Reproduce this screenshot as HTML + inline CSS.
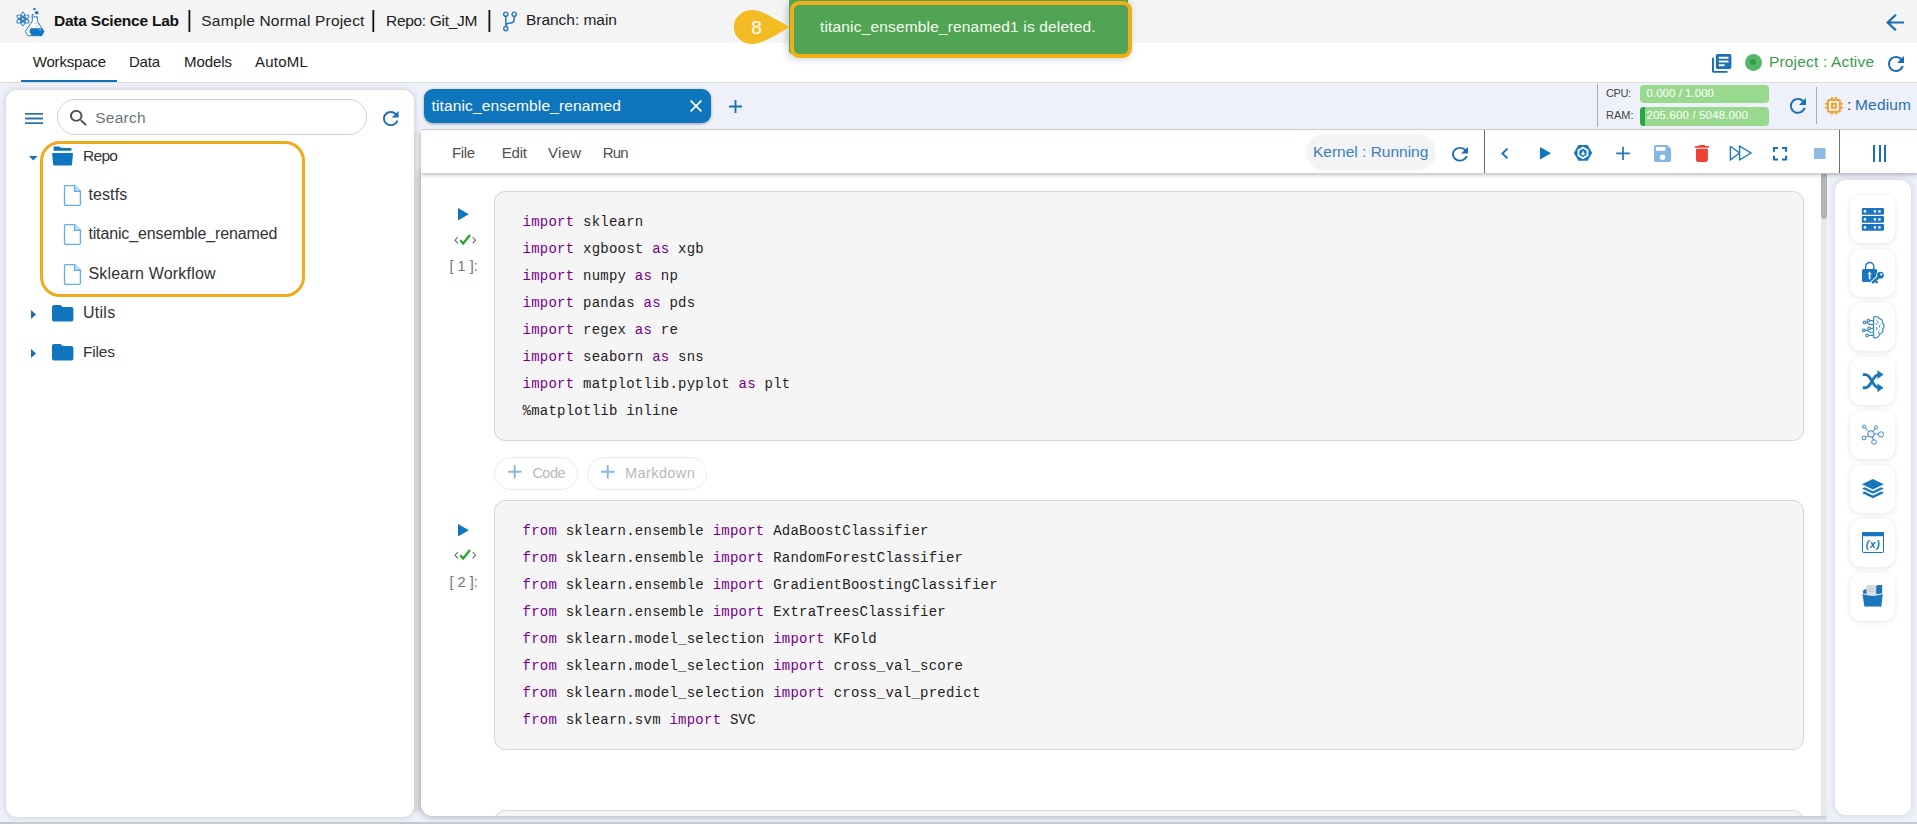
<!DOCTYPE html>
<html lang="en"><head><meta charset="utf-8"><title>Data Science Lab</title>
<style>
*{box-sizing:border-box;margin:0;padding:0}
html,body{width:1917px;height:824px;overflow:hidden}
body{position:relative;background:#eef1f9;font-family:"Liberation Sans",sans-serif;color:#333;font-size:16px}
.abs{position:absolute}
.t{position:absolute;white-space:nowrap;line-height:1}
svg{position:absolute;display:block;overflow:visible}
#topbar{left:0;top:0;width:1917px;height:43px;background:#f4f4f4}
#navbar{left:0;top:43px;width:1917px;height:40px;background:#fff;border-bottom:1px solid #dcdde3}
.sep{position:absolute;width:1.75px;background:#111;top:10px;height:22px}
#ul{left:21px;top:80px;width:96px;height:2px;background:#1570b8}
#left{left:6px;top:90px;width:408px;height:727px;background:#fff;border-radius:11px;box-shadow:0 0 6px 0 rgba(70,72,95,.24)}
#nb{left:421px;top:173px;width:1406px;height:643px;background:#fff;border-radius:0 0 0 11px;box-shadow:0 0 6px 1px rgba(70,72,85,.42);clip-path:inset(-12px 0 -12px -12px)}
#right{left:1835px;top:180px;width:76px;height:635px;background:#fff;border-radius:11px;box-shadow:0 0 6px 0 rgba(70,72,95,.2)}
#bottomline{left:0;top:822px;width:1917px;height:2px;background:#c9c8cc}
#tabstripline{left:421px;top:129px;width:1496px;height:1px;background:#cfd1d8}
#tab{left:424px;top:89px;width:287px;height:34px;background:#0f75bc;border-radius:9px;box-shadow:0 1px 3px rgba(0,0,0,.35)}
#toolbar{left:421px;top:130px;width:1496px;height:43px;background:#fff;box-shadow:0 2px 4px rgba(0,0,0,.25)}
.vsep{position:absolute;width:1px;background:#6e6e6e}
#kernel{left:1306px;top:134px;width:130px;height:36px;border-radius:18px;background:#f3f4f6}
#search{left:57px;top:99px;width:310px;height:36px;border:1px solid #cfcfcf;border-radius:18px;background:#fff}
#hl{left:40.2px;top:140.8px;width:264.6px;height:155.8px;border:3.5px solid #f0ab1c;border-radius:20px}
.cell{position:absolute;left:494px;width:1310px;background:#f5f5f5;border:1px solid #d6d6d6;border-radius:11px}
.code{position:absolute;left:522.5px;font-family:"Liberation Mono",monospace;font-size:14px;letter-spacing:.24px;line-height:27px;color:#222;white-space:pre}
.code b{font-weight:400;color:#770088}
.pill{position:absolute;height:33px;top:457px;border:1px solid #ebebeb;border-radius:17px;background:#fff}
.bar{position:absolute;left:1640px;width:129px;border-radius:4px;background:#98d98e;overflow:hidden}
.ibtn{position:absolute;left:1850px;width:45px;height:48.3px;border-radius:11px;background:#fff;box-shadow:0 1px 5px rgba(60,70,110,.15)}
#toast{left:789px;top:0;width:339px;height:54px;background:#52a455;border-radius:0 0 4px 4px;box-shadow:0 3px 10px rgba(0,0,0,.28)}
#toasthl{left:790px;top:1px;width:341.5px;height:57px;border:4.5px solid #f2ad18;border-radius:9px}
</style></head>
<body>
<div class="abs" id="topbar"></div><div class="abs" id="navbar"></div><div class="abs" id="ul"></div><svg style="left:0.00px;top:0.00px" width="60.00" height="43.00" viewBox="0 0 60 43" preserveAspectRatio="none"><ellipse cx="22.9" cy="19" rx="6.8" ry="2.3" transform="rotate(90 22.9 19)" fill="none" stroke="#1b75bc" stroke-width="1"/><ellipse cx="22.9" cy="19" rx="6.8" ry="2.3" transform="rotate(30 22.9 19)" fill="none" stroke="#1b75bc" stroke-width="1"/><ellipse cx="22.9" cy="19" rx="6.8" ry="2.3" transform="rotate(-30 22.9 19)" fill="none" stroke="#1b75bc" stroke-width="1"/><circle cx="22.9" cy="19" r="1.5" fill="#bfe3fb" stroke="#1b75bc" stroke-width=".9"/><path d="M31.4 16.9H38.1M32.3 17V21.2L25.3 31.5 27.8 35.7H41.7L44 31.5 37.3 21.2V17" fill="#fff" stroke="#1b75bc" stroke-width=".95" stroke-linejoin="round"/><path d="M30.6 28.2H41.9L44 31.5 41.7 35.7H31.6L29.4 31.5Z" fill="#1277c4"/><path d="M38.5 29.6h3.6v.9h-3.6z" fill="#6fb1e4"/><path d="M34.3 23h3v.7h-3zM36 25.6h2.6v.7H36z" fill="#b9bcc2"/><circle cx="34.5" cy="9" r="1.2" fill="#1b75bc"/><circle cx="36.7" cy="12.8" r="1.8" fill="#1b75bc"/><circle cx="32.6" cy="14.9" r=".95" fill="#1b75bc"/></svg><span class="t" id="t0" style="left:54.00px;top:13.00px;font-size:15.5px;color:#111;font-weight:700;letter-spacing:-0.224px;">Data Science Lab</span><svg style="left:0.00px;top:0.00px" width="600.00" height="43.00" viewBox="0 0 600 43" preserveAspectRatio="none"><rect x="188.5" y="10" width="1.8" height="22" fill="#111"/></svg><span class="t" id="t1" style="left:201.30px;top:13.00px;font-size:15.5px;color:#222;letter-spacing:0.187px;">Sample Normal Project</span><svg style="left:0.00px;top:0.00px" width="600.00" height="43.00" viewBox="0 0 600 43" preserveAspectRatio="none"><rect x="372.4" y="10" width="1.8" height="22" fill="#111"/></svg><span class="t" id="t2" style="left:386.00px;top:13.00px;font-size:15.5px;color:#222;letter-spacing:-0.315px;">Repo: Git_JM</span><svg style="left:0.00px;top:0.00px" width="600.00" height="43.00" viewBox="0 0 600 43" preserveAspectRatio="none"><rect x="488.5" y="10" width="1.8" height="22" fill="#111"/></svg><svg style="left:495.00px;top:5.00px" width="30.00" height="33.00" viewBox="495 5 30 33" preserveAspectRatio="none"><path d="M505.8 16.5V26.3M514.2 16.5V19.5Q514.2 22.6 511 22.9L508.5 23.2Q505.8 23.6 505.8 26" fill="none" stroke="#2e7ab8" stroke-width="1.5"/><circle cx="505.8" cy="14.2" r="2.1" fill="#e4fbff" stroke="#2e7ab8" stroke-width="1.4"/><circle cx="514.2" cy="14.2" r="2.1" fill="#e4fbff" stroke="#2e7ab8" stroke-width="1.4"/><circle cx="505.8" cy="28.6" r="2.1" fill="#e4fbff" stroke="#2e7ab8" stroke-width="1.4"/></svg><span class="t" id="t3" style="left:526.00px;top:12.00px;font-size:15.5px;color:#222;letter-spacing:-0.030px;">Branch: main</span><svg style="left:1886.40px;top:14.00px" width="18.10" height="17.00" viewBox="4 4 16 16" preserveAspectRatio="none"><path fill="#1b6fb5" d="M20 11H7.83l5.59-5.59L12 4l-8 8 8 8 1.41-1.41L7.83 13H20v-2z" /></svg><span class="t" id="t4" style="left:32.75px;top:54.00px;font-size:15px;color:#222;letter-spacing:-0.189px;">Workspace</span><span class="t" id="t5" style="left:129.00px;top:54.00px;font-size:15px;color:#222;letter-spacing:-0.229px;">Data</span><span class="t" id="t6" style="left:184.00px;top:54.00px;font-size:15px;color:#222;letter-spacing:-0.072px;">Models</span><span class="t" id="t7" style="left:255.00px;top:54.00px;font-size:15px;color:#222;letter-spacing:0.209px;">AutoML</span><svg style="left:1712.00px;top:54.00px" width="19.40" height="18.75" viewBox="2 2 20 20" preserveAspectRatio="none"><path fill="#1b6fb5" d="M4 6H2v14c0 1.1.9 2 2 2h14v-2H4V6zm16-4H8c-1.1 0-2 .9-2 2v12c0 1.1.9 2 2 2h12c1.1 0 2-.9 2-2V4c0-1.1-.9-2-2-2zm-1 9H9V9h10v2zm-4 4H9v-2h6v2zm4-8H9V5h10v2z" /></svg><div class="abs" style="left:1744.7px;top:53.7px;width:17px;height:17px;border-radius:50%;background:#52b86a"></div><div class="abs" style="left:1750.2px;top:59.2px;width:6px;height:6px;border-radius:50%;background:#2d9f45"></div><span class="t" id="t8" style="left:1769.00px;top:54.00px;font-size:15.5px;color:#3d9950;letter-spacing:0.166px;">Project : Active</span><svg style="left:1888.00px;top:56.00px" width="16.00" height="16.00" viewBox="4 4 16 16" preserveAspectRatio="none"><path fill="#1b6fb5" d="M17.65 6.35C16.2 4.9 14.21 4 12 4c-4.42 0-7.99 3.58-7.99 8s3.57 8 7.99 8c3.73 0 6.84-2.55 7.73-6h-2.08c-.82 2.33-3.04 4-5.65 4-3.31 0-6-2.69-6-6s2.69-6 6-6c1.66 0 3.14.69 4.22 1.78L13 11h7V4l-2.35 2.35z" /></svg>
<div class="abs" id="tab"></div><span class="t" id="t9" style="left:431.50px;top:98.00px;font-size:15.5px;color:#fff;letter-spacing:0.147px;">titanic_ensemble_renamed</span><svg style="left:690.00px;top:100.00px" width="12.00" height="12.00" viewBox="5 5 14 14" preserveAspectRatio="none"><path fill="#fff" d="M19 6.41L17.59 5 12 10.59 6.41 5 5 6.41 10.59 12 5 17.59 6.41 19 12 13.41 17.59 19 19 17.59 13.41 12z" /></svg><svg style="left:729.00px;top:100.00px" width="13.00" height="13.00" viewBox="5 5 14 14" preserveAspectRatio="none"><path fill="#1b6fb5" d="M19 13h-6v6h-2v-6H5v-2h6V5h2v6h6v2z" /></svg><div class="abs" id="tabstripline"></div><div class="vsep" style="left:1596.5px;top:84px;height:43px;background:#a9abb0"></div><span class="t" id="t10" style="left:1606.00px;top:88.00px;font-size:11px;color:#444;letter-spacing:-0.427px;">CPU:</span><span class="t" id="t11" style="left:1606.00px;top:110.00px;font-size:11px;color:#444;letter-spacing:0.033px;">RAM:</span><div class="bar" style="top:85px;height:17.5px"></div><div class="bar" style="top:107px;height:18.6px"><div style="width:5px;height:100%;background:#27a744"></div></div><span class="t" id="t12" style="left:1646.50px;top:88.00px;font-size:11.5px;color:#fff;letter-spacing:0.029px;">0.000 / 1.000</span><span class="t" id="t13" style="left:1646.50px;top:110.00px;font-size:11.5px;color:#fff;letter-spacing:0.140px;">205.600 / 5048.000</span><svg style="left:1790.00px;top:97.60px" width="16.00" height="15.80" viewBox="4 4 16 16" preserveAspectRatio="none"><path fill="#1b6fb5" d="M17.65 6.35C16.2 4.9 14.21 4 12 4c-4.42 0-7.99 3.58-7.99 8s3.57 8 7.99 8c3.73 0 6.84-2.55 7.73-6h-2.08c-.82 2.33-3.04 4-5.65 4-3.31 0-6-2.69-6-6s2.69-6 6-6c1.66 0 3.14.69 4.22 1.78L13 11h7V4l-2.35 2.35z" /></svg><div class="vsep" style="left:1816px;top:87px;height:37px;background:#a9abb0"></div><svg style="left:1825.00px;top:96.70px" width="17.80" height="17.60" viewBox="3 3 18 18" preserveAspectRatio="none"><path fill="#f0a22e" d="M15 9H9v6h6V9zm-2 4h-2v-2h2v2zm8-2V9h-2V7c0-1.1-.9-2-2-2h-2V3h-2v2h-2V3H9v2H7c-1.1 0-2 .9-2 2v2H3v2h2v2H3v2h2v2c0 1.1.9 2 2 2h2v2h2v-2h2v2h2v-2h2c1.1 0 2-.9 2-2v-2h2v-2h-2v-2h2zm-4 6H7V7h10v10z" /></svg><span class="t" id="t14" style="left:1847.00px;top:97.00px;font-size:15.5px;color:#333;">:</span><span class="t" id="t15" style="left:1855.00px;top:97.00px;font-size:15.5px;color:#2a6fb0;letter-spacing:0.172px;">Medium</span>
<div class="abs" style="left:413px;top:132px;width:9px;height:680px;background:#e6e8ec"></div><div class="abs" id="left"></div><svg style="left:25.00px;top:113.00px" width="18.00" height="11.00" viewBox="3 6 18 12" preserveAspectRatio="none"><path fill="#2a73b5" d="M3 18h18v-2H3v2zm0-5h18v-2H3v2zm0-7v2h18V6H3z" /></svg><div class="abs" id="search"></div><svg style="left:69.60px;top:109.80px" width="16.80" height="15.80" viewBox="3 3 17.49 17.49" preserveAspectRatio="none"><path fill="#505050" d="M15.5 14h-.79l-.28-.27C15.41 12.59 16 11.11 16 9.5 16 5.91 13.09 3 9.5 3S3 5.91 3 9.5 5.91 16 9.5 16c1.61 0 3.09-.59 4.23-1.57l.27.28v.79l5 4.99L20.49 19l-4.99-5zm-6 0C7.01 14 5 11.99 5 9.5S7.01 5 9.5 5 14 7.01 14 9.5 11.99 14 9.5 14z" /></svg><span class="t" id="t16" style="left:95.25px;top:110.00px;font-size:15.5px;color:#6c757d;letter-spacing:0.245px;">Search</span><svg style="left:383.40px;top:111.00px" width="15.60" height="15.00" viewBox="4 4 16 16" preserveAspectRatio="none"><path fill="#1b6fb5" d="M17.65 6.35C16.2 4.9 14.21 4 12 4c-4.42 0-7.99 3.58-7.99 8s3.57 8 7.99 8c3.73 0 6.84-2.55 7.73-6h-2.08c-.82 2.33-3.04 4-5.65 4-3.31 0-6-2.69-6-6s2.69-6 6-6c1.66 0 3.14.69 4.22 1.78L13 11h7V4l-2.35 2.35z" /></svg><div class="abs" id="hl"></div><svg style="left:29.40px;top:155.60px" width="8.60" height="4.40" viewBox="7 10 10 5" preserveAspectRatio="none"><path fill="#1b6fb5" d="M7 10l5 5 5-5z" /></svg><svg style="left:48.00px;top:143.00px" width="30.00" height="25.00" viewBox="48 143 30 25" preserveAspectRatio="none"><path d="M54.3 146.4H58.8Q59.6 146.4 60.2 147L61.2 148H70.6Q71.5 148 71.5 148.9V150.8H53.6V147.1Q53.6 146.4 54.3 146.4Z" fill="#0f75bc"/><path d="M53 152.9H72.2Q73.1 152.9 73 153.8L72 164.6Q71.9 165.6 70.9 165.6H54.2Q53.3 165.6 53.2 164.6L52.1 153.8Q52 152.9 53 152.9Z" fill="#0f75bc"/></svg><span class="t" id="t17" style="left:83.00px;top:148.00px;font-size:15.5px;color:#333;letter-spacing:-0.688px;">Repo</span><svg style="left:64.30px;top:185.20px" width="17.00" height="20.80" viewBox="0 0 17 21" preserveAspectRatio="none"><path d="M1.5 .6h9.2l5.7 5.7v13.2a1 1 0 0 1-1 1H1.5a1 1 0 0 1-1-1V1.6a1 1 0 0 1 1-1z" fill="#fff" stroke="#62aeea" stroke-width="1.3"/><path d="M10.7 .6v5.7h5.7" fill="#cfe6fa" stroke="#62aeea" stroke-width="1.3"/></svg><span class="t" id="t18" style="left:88.40px;top:187.00px;font-size:16px;color:#333;letter-spacing:0.113px;">testfs</span><svg style="left:64.30px;top:224.30px" width="17.00" height="20.80" viewBox="0 0 17 21" preserveAspectRatio="none"><path d="M1.5 .6h9.2l5.7 5.7v13.2a1 1 0 0 1-1 1H1.5a1 1 0 0 1-1-1V1.6a1 1 0 0 1 1-1z" fill="#fff" stroke="#62aeea" stroke-width="1.3"/><path d="M10.7 .6v5.7h5.7" fill="#cfe6fa" stroke="#62aeea" stroke-width="1.3"/></svg><span class="t" id="t19" style="left:88.40px;top:226.00px;font-size:16px;color:#333;letter-spacing:-0.136px;">titanic_ensemble_renamed</span><svg style="left:64.30px;top:263.80px" width="17.00" height="20.80" viewBox="0 0 17 21" preserveAspectRatio="none"><path d="M1.5 .6h9.2l5.7 5.7v13.2a1 1 0 0 1-1 1H1.5a1 1 0 0 1-1-1V1.6a1 1 0 0 1 1-1z" fill="#fff" stroke="#62aeea" stroke-width="1.3"/><path d="M10.7 .6v5.7h5.7" fill="#cfe6fa" stroke="#62aeea" stroke-width="1.3"/></svg><span class="t" id="t20" style="left:88.40px;top:266.00px;font-size:16px;color:#333;letter-spacing:0.201px;">Sklearn Workflow</span><svg style="left:31.30px;top:309.70px" width="5.10" height="9.00" viewBox="10 7 5 10" preserveAspectRatio="none"><path fill="#1b6fb5" d="M10 17l5-5-5-5v10z" /></svg><svg style="left:51.80px;top:305.00px" width="21.40" height="16.50" viewBox="2 4 20 16" preserveAspectRatio="none"><path fill="#0f75bc" d="M10 4H4c-1.1 0-1.99.9-1.99 2L2 18c0 1.1.9 2 2 2h16c1.1 0 2-.9 2-2V8c0-1.1-.9-2-2-2h-8l-2-2z" /></svg><span class="t" id="t21" style="left:83.00px;top:305.00px;font-size:16px;color:#333;letter-spacing:0.273px;">Utils</span><svg style="left:31.30px;top:348.90px" width="5.10" height="9.00" viewBox="10 7 5 10" preserveAspectRatio="none"><path fill="#1b6fb5" d="M10 17l5-5-5-5v10z" /></svg><svg style="left:51.80px;top:344.20px" width="21.40" height="16.50" viewBox="2 4 20 16" preserveAspectRatio="none"><path fill="#0f75bc" d="M10 4H4c-1.1 0-1.99.9-1.99 2L2 18c0 1.1.9 2 2 2h16c1.1 0 2-.9 2-2V8c0-1.1-.9-2-2-2h-8l-2-2z" /></svg><span class="t" id="t22" style="left:83.00px;top:344.00px;font-size:15.5px;color:#333;letter-spacing:-0.184px;">Files</span>
<div class="abs" id="nb"></div><div class="abs" style="left:1821px;top:173px;width:6px;height:643px;background:#e9e9e9"></div><div class="abs" style="left:1821px;top:174px;width:6px;height:44.5px;background:#b4b4b4;border-radius:0 0 3px 3px"></div><div class="cell" style="top:191px;height:249.5px"></div><div class="cell" style="top:500px;height:249.5px"></div><div class="cell" style="top:810px;height:30px;clip-path:inset(0 0 24px 0)"></div><pre class="code" style="top:209px"><b>import</b> sklearn
<b>import</b> xgboost <b>as</b> xgb
<b>import</b> numpy <b>as</b> np
<b>import</b> pandas <b>as</b> pds
<b>import</b> regex <b>as</b> re
<b>import</b> seaborn <b>as</b> sns
<b>import</b> matplotlib.pyplot <b>as</b> plt
%matplotlib inline</pre><pre class="code" style="top:518px"><b>from</b> sklearn.ensemble <b>import</b> AdaBoostClassifier
<b>from</b> sklearn.ensemble <b>import</b> RandomForestClassifier
<b>from</b> sklearn.ensemble <b>import</b> GradientBoostingClassifier
<b>from</b> sklearn.ensemble <b>import</b> ExtraTreesClassifier
<b>from</b> sklearn.model_selection <b>import</b> KFold
<b>from</b> sklearn.model_selection <b>import</b> cross_val_score
<b>from</b> sklearn.model_selection <b>import</b> cross_val_predict
<b>from</b> sklearn.svm <b>import</b> SVC</pre><svg style="left:458.40px;top:208.30px" width="10.80" height="12.60" viewBox="8 5 11 14" preserveAspectRatio="none"><path fill="#0f75bc" d="M8 5v14l11-7z" /></svg><svg style="left:453.80px;top:233.90px" width="22.50" height="11.40" viewBox="0 0 22.5 11.4" preserveAspectRatio="none"><path d="M3.8 3 1 6.2l2.8 3.2M18.7 3l2.8 3.2-2.8 3.2" fill="none" stroke="#666" stroke-width="1.1"/><path d="M6.2 6.2l3 3.3L16 1" fill="none" stroke="#22a722" stroke-width="2.2"/></svg><span class="t" id="t23" style="left:449.40px;top:259.00px;font-size:14.5px;color:#777;letter-spacing:0.036px;">[ 1 ]:</span><svg style="left:458.40px;top:524.30px" width="10.80" height="12.60" viewBox="8 5 11 14" preserveAspectRatio="none"><path fill="#0f75bc" d="M8 5v14l11-7z" /></svg><svg style="left:453.80px;top:549.40px" width="22.50" height="11.40" viewBox="0 0 22.5 11.4" preserveAspectRatio="none"><path d="M3.8 3 1 6.2l2.8 3.2M18.7 3l2.8 3.2-2.8 3.2" fill="none" stroke="#666" stroke-width="1.1"/><path d="M6.2 6.2l3 3.3L16 1" fill="none" stroke="#22a722" stroke-width="2.2"/></svg><span class="t" id="t24" style="left:449.40px;top:575.00px;font-size:14.5px;color:#777;letter-spacing:0.036px;">[ 2 ]:</span><div class="pill" style="left:494px;width:83.5px"></div><div class="pill" style="left:587px;width:119.5px"></div><svg style="left:508.30px;top:465.00px" width="13.40" height="13.40" viewBox="5 5 14 14" preserveAspectRatio="none"><path fill="#8cb8de" d="M19 13h-6v6h-2v-6H5v-2h6V5h2v6h6v2z" /></svg><span class="t" id="t25" style="left:532.40px;top:466.00px;font-size:14.5px;color:#b8b8b8;letter-spacing:-0.491px;">Code</span><svg style="left:600.50px;top:465.00px" width="13.50" height="13.40" viewBox="5 5 14 14" preserveAspectRatio="none"><path fill="#8cb8de" d="M19 13h-6v6h-2v-6H5v-2h6V5h2v6h6v2z" /></svg><span class="t" id="t26" style="left:625.00px;top:466.00px;font-size:14.5px;color:#b8b8b8;letter-spacing:0.416px;">Markdown</span>
<div class="abs" id="toolbar"></div><span class="t" id="t27" style="left:452.00px;top:145.00px;font-size:15px;color:#505050;letter-spacing:-0.391px;">File</span><span class="t" id="t28" style="left:501.80px;top:145.00px;font-size:15px;color:#505050;letter-spacing:-0.220px;">Edit</span><span class="t" id="t29" style="left:548.00px;top:145.00px;font-size:15px;color:#505050;letter-spacing:0.317px;">View</span><span class="t" id="t30" style="left:602.80px;top:145.00px;font-size:15px;color:#505050;letter-spacing:-0.916px;">Run</span><div class="abs" id="kernel"></div><span class="t" id="t31" style="left:1313.00px;top:144.00px;font-size:15.5px;color:#3d7fb8;letter-spacing:-0.011px;">Kernel : Running</span><svg style="left:1452.00px;top:146.70px" width="16.00" height="14.60" viewBox="4 4 16 16" preserveAspectRatio="none"><path fill="#1b6fb5" d="M17.65 6.35C16.2 4.9 14.21 4 12 4c-4.42 0-7.99 3.58-7.99 8s3.57 8 7.99 8c3.73 0 6.84-2.55 7.73-6h-2.08c-.82 2.33-3.04 4-5.65 4-3.31 0-6-2.69-6-6s2.69-6 6-6c1.66 0 3.14.69 4.22 1.78L13 11h7V4l-2.35 2.35z" /></svg><div class="vsep" style="left:1484px;top:130px;height:43px"></div><svg style="left:1500.80px;top:148.00px" width="7.20" height="11.00" viewBox="8 6 7.41 12" preserveAspectRatio="none"><path fill="#1b6fb5" d="M15.41 7.41L14 6l-6 6 6 6 1.41-1.41L10.83 12z" /></svg><svg style="left:1539.60px;top:147.00px" width="11.00" height="12.60" viewBox="8 5 11 14" preserveAspectRatio="none"><path fill="#0f75bc" d="M8 5v14l11-7z" /></svg><svg style="left:1570.00px;top:140.00px" width="26.00" height="26.00" viewBox="1570 140 26 26" preserveAspectRatio="none"><polygon points="1592.20,152.90 1587.60,160.87 1578.40,160.87 1573.80,152.90 1578.40,144.93 1587.60,144.93" fill="#1b75bc"/><polygon points="1588.46,156.05 1583.00,159.20 1577.54,156.05 1577.54,149.75 1583.00,146.60 1588.46,149.75" fill="#eaf8ff"/><polygon points="1586.55,154.95 1583.00,157.00 1579.45,154.95 1579.45,150.85 1583.00,148.80 1586.55,150.85" fill="#1b75bc"/><path d="M1583 150.6 1585 154.3Q1583 156 1581 154.3Z" fill="#d9f4ff"/></svg><svg style="left:1610.00px;top:140.00px" width="26.00" height="26.00" viewBox="1610 140 26 26" preserveAspectRatio="none"><path d="M1616.2 153.4H1629.8M1623 146.8V160" stroke="#2273b7" stroke-width="1.7" fill="none"/></svg><svg style="left:1653.70px;top:145.00px" width="17.10" height="17.00" viewBox="3 3 18 18" preserveAspectRatio="none"><path fill="#85b6e0" d="M17 3H5c-1.11 0-2 .9-2 2v14c0 1.1.89 2 2 2h14c1.1 0 2-.9 2-2V7l-4-4zm-5 16c-1.66 0-3-1.34-3-3s1.34-3 3-3 3 1.34 3 3-1.34 3-3 3zm3-10H5V5h10v4z" /></svg><svg style="left:1694.70px;top:145.00px" width="13.90" height="17.00" viewBox="5 3 14 18" preserveAspectRatio="none"><path fill="#ef4136" d="M6 19c0 1.1.9 2 2 2h8c1.1 0 2-.9 2-2V7H6v12zM19 4h-3.5l-1-1h-5l-1 1H5v2h14V4z" /></svg><svg style="left:1725.00px;top:140.00px" width="32.00" height="26.00" viewBox="1725 140 32 26" preserveAspectRatio="none"><path d="M1730.4 146.2V159.8L1739.6 153M1730.4 146.2 1739.6 153M1739.6 146.2V159.8L1751 153Z" fill="none" stroke="#1b75bc" stroke-width="1.35" stroke-linejoin="miter"/></svg><svg style="left:1773.40px;top:146.80px" width="14.10" height="13.50" viewBox="5 5 14 14" preserveAspectRatio="none"><path fill="#1b6fb5" d="M7 14H5v5h5v-2H7v-3zm-2-4h2V7h3V5H5v5zm12 7h-3v2h5v-5h-2v3zM14 5v2h3v3h2V5h-5z" /></svg><svg style="left:1814.40px;top:148.00px" width="11.60" height="11.00" viewBox="6 6 12 12" preserveAspectRatio="none"><path fill="#8dbbe3" d="M6 6h12v12H6z" /></svg><div class="vsep" style="left:1839px;top:130px;height:43px"></div><div class="abs" style="left:1872.9px;top:145px;width:2px;height:17px;background:#1b6fb5"></div><div class="abs" style="left:1878.6px;top:145px;width:2px;height:17px;background:#1b6fb5"></div><div class="abs" style="left:1884.3px;top:145px;width:2px;height:17px;background:#1b6fb5"></div>
<div class="abs" id="right"></div><div class="ibtn" style="top:194.7px"></div><div class="ibtn" style="top:248.7px"></div><div class="ibtn" style="top:302.7px"></div><div class="ibtn" style="top:356.7px"></div><div class="ibtn" style="top:410.7px"></div><div class="ibtn" style="top:464.7px"></div><div class="ibtn" style="top:518.7px"></div><div class="ibtn" style="top:572.7px"></div><svg style="left:1845.00px;top:190.00px" width="56.00" height="440.00" viewBox="1845 190 56 440" preserveAspectRatio="none"><rect x="1861.8" y="208" width="22.2" height="6.8" rx="1.2" fill="#1b75bc"/><circle cx="1865" cy="211.4" r="1.35" fill="#fff"/><rect x="1873.8" y="210.2" width="2.3" height="2.4" fill="#fff"/><rect x="1878.3" y="210.2" width="2.3" height="2.4" fill="#fff"/><rect x="1861.8" y="216" width="22.2" height="6.8" rx="1.2" fill="#1b75bc"/><circle cx="1865" cy="219.4" r="1.35" fill="#fff"/><rect x="1873.8" y="218.2" width="2.3" height="2.4" fill="#fff"/><rect x="1878.3" y="218.2" width="2.3" height="2.4" fill="#fff"/><rect x="1861.8" y="224" width="22.2" height="6.8" rx="1.2" fill="#1b75bc"/><circle cx="1865" cy="227.4" r="1.35" fill="#fff"/><rect x="1873.8" y="226.2" width="2.3" height="2.4" fill="#fff"/><rect x="1878.3" y="226.2" width="2.3" height="2.4" fill="#fff"/><path d="M1865.6 269.5V266.6A4.1 4.1 0 0 1 1873.8 266.6V269.5" fill="none" stroke="#1b75bc" stroke-width="1.4"/><rect x="1862" y="268.9" width="15.2" height="13.2" rx="1.6" fill="#1b75bc"/><path d="M1869.6 271.6 1871.6 274.3H1870.4V279.3H1868.8V274.3H1867.6Z" fill="#fff"/><path d="M1879 277 1872.6 282.6" stroke="#fff" stroke-width="4.4" stroke-linecap="round" fill="none"/><circle cx="1880.4" cy="275.2" r="4.3" fill="#fff"/><path d="M1879 277 1872.8 282.4M1875.2 280.6l1.5 1.6" stroke="#1b75bc" stroke-width="2.4" stroke-linecap="round" fill="none"/><circle cx="1880.4" cy="275.2" r="3.4" fill="#1b75bc"/><circle cx="1881.2" cy="274.4" r="1.1" fill="#fff"/><g transform="translate(0 1)"><path d="M1873.6 316.2C1875.4 315 1878.3 315.4 1879.2 317.6C1881.7 317.6 1883 319.8 1882.4 321.8C1884.4 323.3 1884.5 326.6 1882.6 328C1883.4 330.4 1882 332.6 1879.8 332.8C1879.5 335.8 1876 337.8 1873.6 336.4Z" fill="none" stroke="#3d86c6" stroke-width="1.2"/><path d="M1876.5 319.5Q1878.6 320.5 1878 322.8M1880.5 323.5Q1878.6 324.4 1879.3 326.6M1876 326Q1877.5 327.4 1876.6 329.3M1879.8 329.6Q1878.2 330.6 1878.6 332.4M1875.3 322.7l1.6 1.2" fill="none" stroke="#3d86c6" stroke-width="1"/><path d="M1873.6 319.6H1869.7M1873.6 323.4H1869.2L1867 321.4H1865.8M1873.6 327.4H1870.3M1873.6 331.2H1869.4L1867.2 329.4H1865M1873.6 334.4H1868.4" fill="none" stroke="#3d86c6" stroke-width="1.1"/><circle cx="1868.4" cy="319.6" r="1.3" fill="#fff" stroke="#3d86c6" stroke-width="1.1"/><circle cx="1864.5" cy="321.4" r="1.3" fill="#fff" stroke="#3d86c6" stroke-width="1.1"/><circle cx="1869" cy="327.4" r="1.3" fill="#fff" stroke="#3d86c6" stroke-width="1.1"/><circle cx="1863.7" cy="329.4" r="1.3" fill="#fff" stroke="#3d86c6" stroke-width="1.1"/><circle cx="1867" cy="334.4" r="1.3" fill="#fff" stroke="#3d86c6" stroke-width="1.1"/></g><path d="M1862.8 374.6H1865.5C1871.5 374.6 1872.5 387.8 1878.6 387.8H1879.5M1862.8 387.8H1865.5C1871.5 387.8 1872.5 374.6 1878.6 374.6H1879.5" fill="none" stroke="#1b75bc" stroke-width="2.9"/><path d="M1877.4 370.2 1883.6 374.6 1877.4 379ZM1877.4 383.4 1883.6 387.8 1877.4 392.2Z" fill="#1b75bc"/><path d="M1871 434 1864.1 426.7M1871 434 1876 427.4M1871 434H1881M1871 434 1864 438M1871 434 1874 442" stroke="#3d86c6" stroke-width="1" fill="none"/><circle cx="1871" cy="434" r="3.3" fill="#e8eef5" stroke="#3d86c6" stroke-width="1"/><circle cx="1864.1" cy="426.7" r="1.6" fill="#fff" stroke="#3d86c6" stroke-width="1"/><circle cx="1876" cy="427.4" r="1.6" fill="#fff" stroke="#3d86c6" stroke-width="1"/><circle cx="1881" cy="434.4" r="2.6" fill="#fff" stroke="#3d86c6" stroke-width="1"/><circle cx="1864" cy="438" r="1.9" fill="#fff" stroke="#3d86c6" stroke-width="1"/><circle cx="1874" cy="442" r="2.3" fill="#fff" stroke="#3d86c6" stroke-width="1"/><path d="M1872.9 478.9 1883.8 484.2 1872.9 489.5 1862 484.2Z" fill="#1b75bc"/><path d="M1864.6 487.2 1872.9 491.2 1881.2 487.2 1883.8 488.5 1872.9 493.8 1862 488.5Z" fill="#1b75bc"/><path d="M1864.6 491.6 1872.9 495.6 1881.2 491.6 1883.8 492.9 1872.9 498.2 1862 492.9Z" fill="#1b75bc"/><rect x="1862.5" y="532.5" width="21" height="20" rx="1" fill="#fff" stroke="#1b75bc" stroke-width="1"/><path d="M1862 533Q1862 532 1863 532H1883Q1884 532 1884 533V536.2H1862Z" fill="#1b75bc"/><text x="1873" y="547.8" text-anchor="middle" font-family="Liberation Sans,sans-serif" font-style="italic" font-weight="700" font-size="10.5" letter-spacing=".6" fill="#1b75bc">(x)</text><path d="M1863 591.5Q1863 590 1864.4 589.6L1867 589V594H1863Z" fill="#1b75bc"/><path d="M1876 586.6Q1876.6 585.2 1878 585L1881.3 584.9Q1882.2 584.9 1882.2 586V594H1874.5Z" fill="#1b75bc"/><rect x="1866.6" y="585.6" width="9.4" height="9" rx="1" fill="#dfe3e8" stroke="#aeb6c0" stroke-width=".5"/><path d="M1868 588h6.4M1868 589.8h6.4M1868 591.6h6.4" stroke="#b5bcc6" stroke-width=".7"/><path d="M1862.6 593.6Q1872.5 597 1882.6 593.6Q1883.3 593.4 1883.2 594.2L1881.9 605.8Q1881.8 607 1880.6 607H1865.2Q1864 607 1863.8 605.8L1862 594.2Q1861.9 593.4 1862.6 593.6Z" fill="#1b75bc" stroke="#fff" stroke-width=".9"/></svg>
<div class="abs" id="toast"></div><div class="abs" id="toasthl"></div><span class="t" id="t32" style="left:820.00px;top:19.00px;font-size:15.5px;color:#f3fbf0;letter-spacing:0.164px;">titanic_ensemble_renamed1 is deleted.</span><svg style="left:733.00px;top:9.00px" width="58.00" height="36.00" viewBox="0 0 58 36" preserveAspectRatio="none"><path fill="#f3bc25" d="M19.5 1C9 1 .8 8.5 .8 18C.8 27.5 9 35 19.5 35C28.5 35 41 27 56.8 18C41 9 28.5 1 19.5 1Z"/></svg><span class="t" id="t33" style="left:751.30px;top:18.00px;font-size:19px;color:#fff;">8</span>
<div class="abs" id="bottomline"></div>
</body></html>
